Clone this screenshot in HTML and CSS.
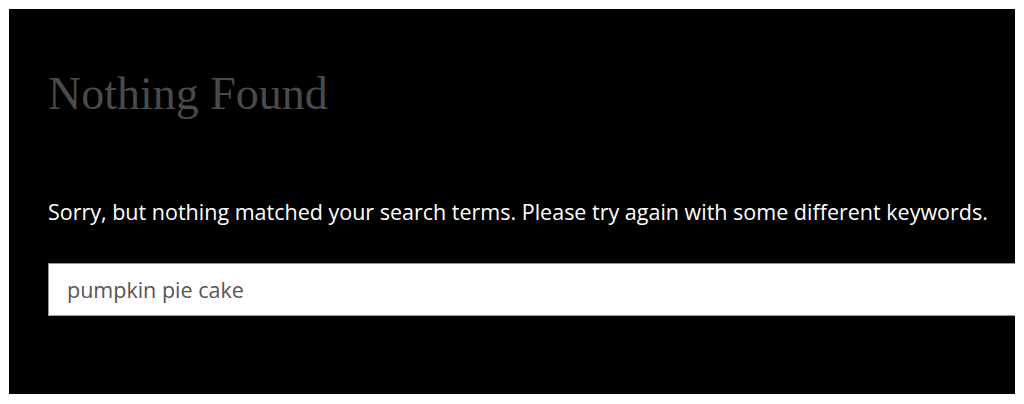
FILE: index.html
```html
<!DOCTYPE html>
<html>
<head>
<meta charset="utf-8">
<link rel="stylesheet" href="styles.css">
</head>
<body>
<main class="page">
  <h1 class="title">Nothing Found</h1>
  <p class="message">Sorry, but nothing matched your search terms. Please try again with some different keywords.</p>
  <form class="search">
    <input class="search-field" type="search" value="pumpkin pie cake">
  </form>
</main>
</body>
</html>
```
FILE: styles.css
```css
html, body {
  margin: 0;
  padding: 0;
  background: #fff;
}
body {
  padding: 9px;
}
.page {
  width: 1006px;
  height: 385px;
  background: #000;
  box-sizing: border-box;
  padding: 59px 0 0 39px;
  overflow: hidden;
}
.title {
  margin: 0;
  font-family: "Liberation Serif", serif;
  font-weight: normal;
  font-size: 46px;
  line-height: 52px;
  color: #4a4a4a;
}
.message {
  margin: 76px 0 0;
  font-family: "Open Sans", sans-serif;
  font-size: 21.5px;
  line-height: 32px;
  color: #fff;
}
.search {
  margin: 35px 0 0;
}
.search-field {
  display: block;
  width: 1000px;
  height: 53px;
  box-sizing: border-box;
  margin: 0;
  border: 1px solid #999;
  background: #fff;
  padding: 0 18px;
  font-family: "Open Sans", sans-serif;
  font-size: 21.5px;
  color: #555;
  outline: none;
  -webkit-appearance: none;
  appearance: none;
}
```
